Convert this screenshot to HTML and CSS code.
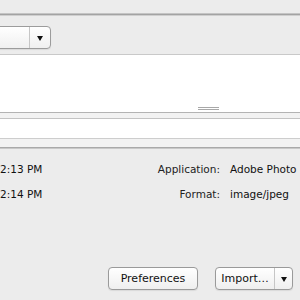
FILE: index.html
```html
<!DOCTYPE html>
<html lang="en">
<head>
    <meta charset="UTF-8">
    <title>Import</title>
    <link rel="stylesheet" href="styles.css">
</head>
<body>
    <div class="topbar"></div>
    <div class="split-dark"></div>

    <!-- Source popup -->
    <div class="toolbar">
        <div class="popup">
            <span class="popup-label"></span>
            <span class="popup-arrow"><span class="tri"></span></span>
        </div>
    </div>

    <!-- Preview area -->
    <div class="preview">
        <div class="grip"></div>
    </div>

    <div class="search-band">
        <div class="search-field"></div>
    </div>
    <div class="split-bottom"></div>

    <!-- File info -->
    <div class="info">
        <div class="info-row">
            <span class="value time">2:13 PM</span>
            <span class="label">Application:</span>
            <span class="value">Adobe Photo</span>
        </div>
        <div class="info-row">
            <span class="value time">2:14 PM</span>
            <span class="label">Format:</span>
            <span class="value">image/jpeg</span>
        </div>
    </div>

    <div class="actions">
        <button class="btn">Preferences</button>
        <div class="btn split">
            <span class="split-main">Import&hellip;</span>
            <span class="split-arrow"><span class="tri"></span></span>
        </div>
    </div>
</body>
</html>
```

FILE: styles.css
```css
* {
    margin: 0;
    padding: 0;
    box-sizing: border-box;
}

body {
    width: 300px;
    height: 300px;
    overflow: hidden;
    background: #ececec;
    font-family: 'DejaVu Sans', Verdana, sans-serif;
    font-size: 10.5px;
    color: #111;
    display: flex;
    flex-direction: column;
}

.topbar {
    height: 13px;
    flex-shrink: 0;
}

.split-dark {
    height: 3px;
    flex-shrink: 0;
    background: #a3a3a3;
    border-top: 1px solid #c4c4c4;
    border-bottom: 1px solid #cfcfcf;
}

.toolbar {
    height: 39px;
    flex-shrink: 0;
    padding-top: 10px;
    border-bottom: 1px solid #c9c9c9;
}

.popup {
    display: flex;
    width: 92px;
    height: 23px;
    margin-left: -41px;
    border: 1px solid #9c9c9c;
    border-radius: 4px;
    background: linear-gradient(#ffffff, #f0f0f0);
    box-shadow: 0 1px 1px rgba(0, 0, 0, 0.08);
}

.popup-label {
    flex: 1;
    border-right: 1px solid #c6c6c6;
}

.popup-arrow,
.split-arrow {
    width: 20px;
    display: flex;
    align-items: center;
    justify-content: center;
}

.tri {
    width: 0;
    height: 0;
    border-left: 3.5px solid transparent;
    border-right: 3.5px solid transparent;
    border-top: 5px solid #111;
    margin-top: 1px;
}

.preview {
    height: 57px;
    flex-shrink: 0;
    background: #fff;
    display: flex;
    flex-direction: column;
    justify-content: flex-end;
}

.grip {
    width: 21px;
    height: 3px;
    margin-left: 198px;
    margin-bottom: 2px;
    border-top: 1px solid #a8a8a8;
    border-bottom: 1px solid #a8a8a8;
}

.search-band {
    flex-shrink: 0;
    border-top: 1px solid #b3b3b3;
    background: #f2f2f2;
    padding-top: 5px;
    height: 37px;
}

.search-field {
    height: 21px;
    background: #fff;
    border-top: 1px solid #c3c3c3;
    border-bottom: 1px solid #cdcdcd;
}

.split-bottom {
    height: 2px;
    flex-shrink: 0;
    background: #a9a9a9;
    border-bottom: 1px solid #c8c8c8;
    margin-top: -2px;
}

.info {
    flex: 1;
    padding-top: 14px;
    display: flex;
    flex-direction: column;
    gap: 12px;
}

.info-row {
    display: grid;
    grid-template-columns: 146px 74px 1fr;
    line-height: 13px;
    white-space: nowrap;
}

.label {
    text-align: right;
    color: #222;
}

.value {
    padding-left: 10px;
}

.value.time {
    padding-left: 0;
}

.actions {
    flex-shrink: 0;
    display: flex;
    justify-content: flex-end;
    gap: 17px;
    padding: 0 7px 10px 0;
}

.btn {
    height: 23px;
    border: 1px solid #9a9a9a;
    border-radius: 4px;
    background: linear-gradient(#ffffff, #efefef);
    box-shadow: 0 1px 1px rgba(0, 0, 0, 0.08);
    font-family: 'DejaVu Sans', Verdana, sans-serif;
    font-size: 11px;
    color: #111;
}

button.btn {
    width: 90px;
}

.split {
    display: flex;
    width: 78px;
}

.split-main {
    flex: 1;
    display: flex;
    align-items: center;
    justify-content: center;
    border-right: 1px solid #c6c6c6;
}

.split-arrow {
    width: 17px;
}
```
